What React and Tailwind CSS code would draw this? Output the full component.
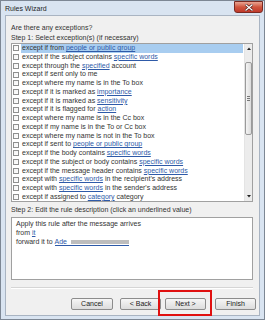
import React from "react";

const L = ({ children }) => (
  <span className="text-[#2e5aa8] underline underline-offset-[1px]">{children}</span>
);

const rows = [
  <>except if from <L>people or public group</L></>,
  <>except if the subject contains <L>specific words</L></>,
  <>except through the <L>specified</L> account</>,
  <>except if sent only to me</>,
  <>except where my name is in the To box</>,
  <>except if it is marked as <L>importance</L></>,
  <>except if it is marked as <L>sensitivity</L></>,
  <>except if it is flagged for <L>action</L></>,
  <>except where my name is in the Cc box</>,
  <>except if my name is in the To or Cc box</>,
  <>except where my name is not in the To box</>,
  <>except if sent to <L>people or public group</L></>,
  <>except if the body contains <L>specific words</L></>,
  <>except if the subject or body contains <L>specific words</L></>,
  <>except if the message header contains <L>specific words</L></>,
  <>except with <L>specific words</L> in the recipient's address</>,
  <>except with <L>specific words</L> in the sender's address</>,
  <>except if assigned to <L>category</L> category</>,
];

function Btn({ children, className = "" }) {
  return (
    <div
      className={
        "h-[12px] w-[41px] flex items-center justify-center rounded-[2px] border border-[#8c8c8c] bg-gradient-to-b from-[#f6f6f6] to-[#dcdcdc] text-[7px] text-[#222] " +
        className
      }
    >
      <span>{children}</span>
    </div>
  );
}

export default function App() {
  return (
    <div
      className="relative w-[265px] h-[320px] overflow-hidden bg-[#d9e4f1] border border-[#7d8794] flex flex-col"
      style={{ fontFamily: '"Liberation Sans", Arial, sans-serif' }}
    >
      {/* title bar */}
      <div className="h-[14px] flex items-center pl-[4px] shrink-0">
        <span className="text-[7px] text-[#1e1e1e] leading-none">Rules Wizard</span>
        <div className="ml-auto mr-[1px] -mt-[2px] h-[12px] w-[29px] rounded-b-[3px] border border-[#7a2a22] bg-gradient-to-b from-[#e8a493] via-[#d0553e] to-[#c0392b] flex items-center justify-center">
          <svg width="8" height="7" viewBox="0 0 8 7">
            <path d="M1 1 L7 6 M7 1 L1 6" stroke="#4a1410" strokeWidth="2.6" strokeLinecap="square" />
            <path d="M1 1 L7 6 M7 1 L1 6" stroke="#ffffff" strokeWidth="1.3" strokeLinecap="square" />
          </svg>
        </div>
      </div>

      {/* content */}
      <div className="flex-1 mx-[4px] mb-[3px] bg-[#f0f0f0] border border-[#a9b4c2] flex flex-col pl-[5px] pr-[6px] text-[7px] text-[#333]">
        <div className="h-[10px] leading-[10px] mt-[7px]">Are there any exceptions?</div>
        <div className="h-[10px] leading-[10px]">Step 1: Select exception(s) (if necessary)</div>

        {/* list */}
        <div className="h-[159px] bg-white border border-[#a0a0a0] flex">
          <div className="flex-1 flex flex-col">
            {rows.map((r, i) => (
              <div key={i} className="h-[8.75px] flex items-center">
                <div className="w-[6px] h-[6px] ml-[1px] border border-[#8e8f8f] bg-gradient-to-br from-[#f2f2f2] to-white shrink-0" />
                <div
                  className={
                    "ml-[2px] h-full flex items-center pl-[1px] whitespace-nowrap flex-1 mr-[1px] " +
                    (i === 0 ? "bg-[#a8cdf0]" : "")
                  }
                >
                  <span>{r}</span>
                </div>
              </div>
            ))}
          </div>
          {/* scrollbar */}
          <div className="w-[8px] bg-[#ececec] border-l border-[#e4e4e4] flex flex-col items-center">
            <div className="h-[9px] flex items-center justify-center">
              <svg width="4" height="3" viewBox="0 0 4 3">
                <path d="M0 3 L2 0.5 L4 3 Z" fill="#222" />
              </svg>
            </div>
            <div className="mt-[9px] w-[7px] h-[73px] rounded-[2px] border border-[#9a9a9a] bg-gradient-to-r from-[#f4f4f4] to-[#dcdcdc] flex flex-col items-center justify-center gap-[1px]">
              <div className="w-[3px] h-[1px] bg-[#777]" />
              <div className="w-[3px] h-[1px] bg-[#777]" />
              <div className="w-[3px] h-[1px] bg-[#777]" />
            </div>
            <div className="mt-auto h-[9px] flex items-center justify-center">
              <svg width="4" height="3" viewBox="0 0 4 3">
                <path d="M0 0 L2 2.5 L4 0 Z" fill="#222" />
              </svg>
            </div>
          </div>
        </div>

        <div className="h-[10px] leading-[10px] mt-[3px]">
          Step 2: Edit the rule description (click an underlined value)
        </div>

        {/* description */}
        <div className="mt-[2px] h-[63px] bg-white border border-[#a0a0a0] pl-[4px] pt-[1px] flex flex-col">
          <div className="h-[9px] leading-[9px]">Apply this rule after the message arrives</div>
          <div className="h-[9px] leading-[9px]">
            from <L>it</L>
          </div>
          <div className="h-[9px] leading-[9px] whitespace-nowrap">
            forward it to{" "}
            <span className="inline-block leading-[7px] text-[#2e5aa8] border-b border-[#2e5aa8]">
              Ade{" "}
              <span className="inline-block align-middle w-[58px] h-[4px] bg-[#bdbdbd] ml-[2px]" />
            </span>
          </div>
        </div>

        {/* separator */}
        <div className="mt-[7px] h-[2px] border-t border-[#d5d5d5] border-b-white border-b" />

        {/* buttons */}
        <div className="mt-[9px] flex justify-end -mr-[3px]">
          <Btn className="w-[42px]">Cancel</Btn>
          <Btn className="ml-[7px]">&lt; Back</Btn>
          <Btn className="ml-[4px] border-[#3c7fb1] from-[#eaf6fd] to-[#bee6fd]">Next &gt;</Btn>
          <Btn className="ml-[9px]">Finish</Btn>
        </div>
      </div>

      {/* red highlight annotation */}
      <div className="absolute left-[157px] top-[289px] w-[54px] h-[26px] border-2 border-[#e01010]" />
    </div>
  );
}
